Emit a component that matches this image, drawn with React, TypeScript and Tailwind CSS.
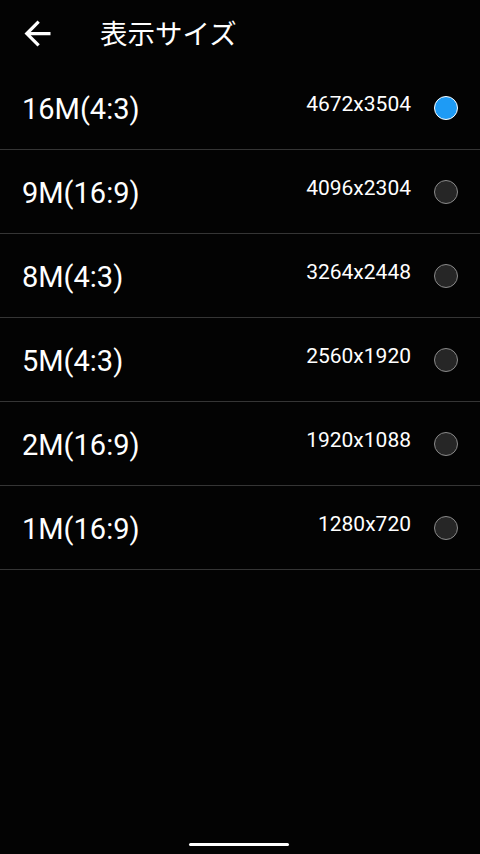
import React from "react";

const rows = [
  { label: "16M(4:3)", res: "4672x3504", selected: true },
  { label: "9M(16:9)", res: "4096x2304", selected: false },
  { label: "8M(4:3)", res: "3264x2448", selected: false },
  { label: "5M(4:3)", res: "2560x1920", selected: false },
  { label: "2M(16:9)", res: "1920x1088", selected: false },
  { label: "1M(16:9)", res: "1280x720", selected: false },
];

export default function App() {
  return (
    <div
      className="w-[480px] h-[854px] bg-[#030303] text-white flex flex-col relative overflow-hidden"
      style={{ fontFamily: "Roboto, 'Noto Sans CJK JP', sans-serif" }}
    >
      <div className="h-[66px] flex items-center">
        <div className="w-[100px] flex items-center pl-[18px]">
          <svg width="39" height="39" viewBox="0 0 24 24">
            <path
              d="M20 11H7.83l5.59-5.59L12 4l-8 8 8 8 1.41-1.41L7.83 13H20v-2z"
              fill="#ffffff"
            />
          </svg>
        </div>
        <div className="text-[27.5px] leading-none -mt-[1px]" style={{ fontFamily: "'Noto Sans CJK JP', sans-serif" }}>
          表示サイズ
        </div>
      </div>
      {rows.map((r) => (
        <div
          key={r.label}
          className="h-[84px] flex items-center border-b border-[#353535] pl-[22px] pr-[22px]"
        >
          <div className="flex-1 text-[29px] leading-none pt-[3px]">{r.label}</div>
          <div className="text-[21px] leading-none pb-[6px] mr-[23px]">{r.res}</div>
          {r.selected ? (
            <div className="w-[24px] h-[24px] rounded-full bg-[#1e9bf5] border border-white"></div>
          ) : (
            <div className="w-[24px] h-[24px] rounded-full bg-[#262626] border-[1.5px] border-[#8a8a8a]"></div>
          )}
        </div>
      ))}
      <div className="absolute left-[189px] top-[843px] w-[100px] h-[3px] bg-white rounded-full"></div>
    </div>
  );
}
